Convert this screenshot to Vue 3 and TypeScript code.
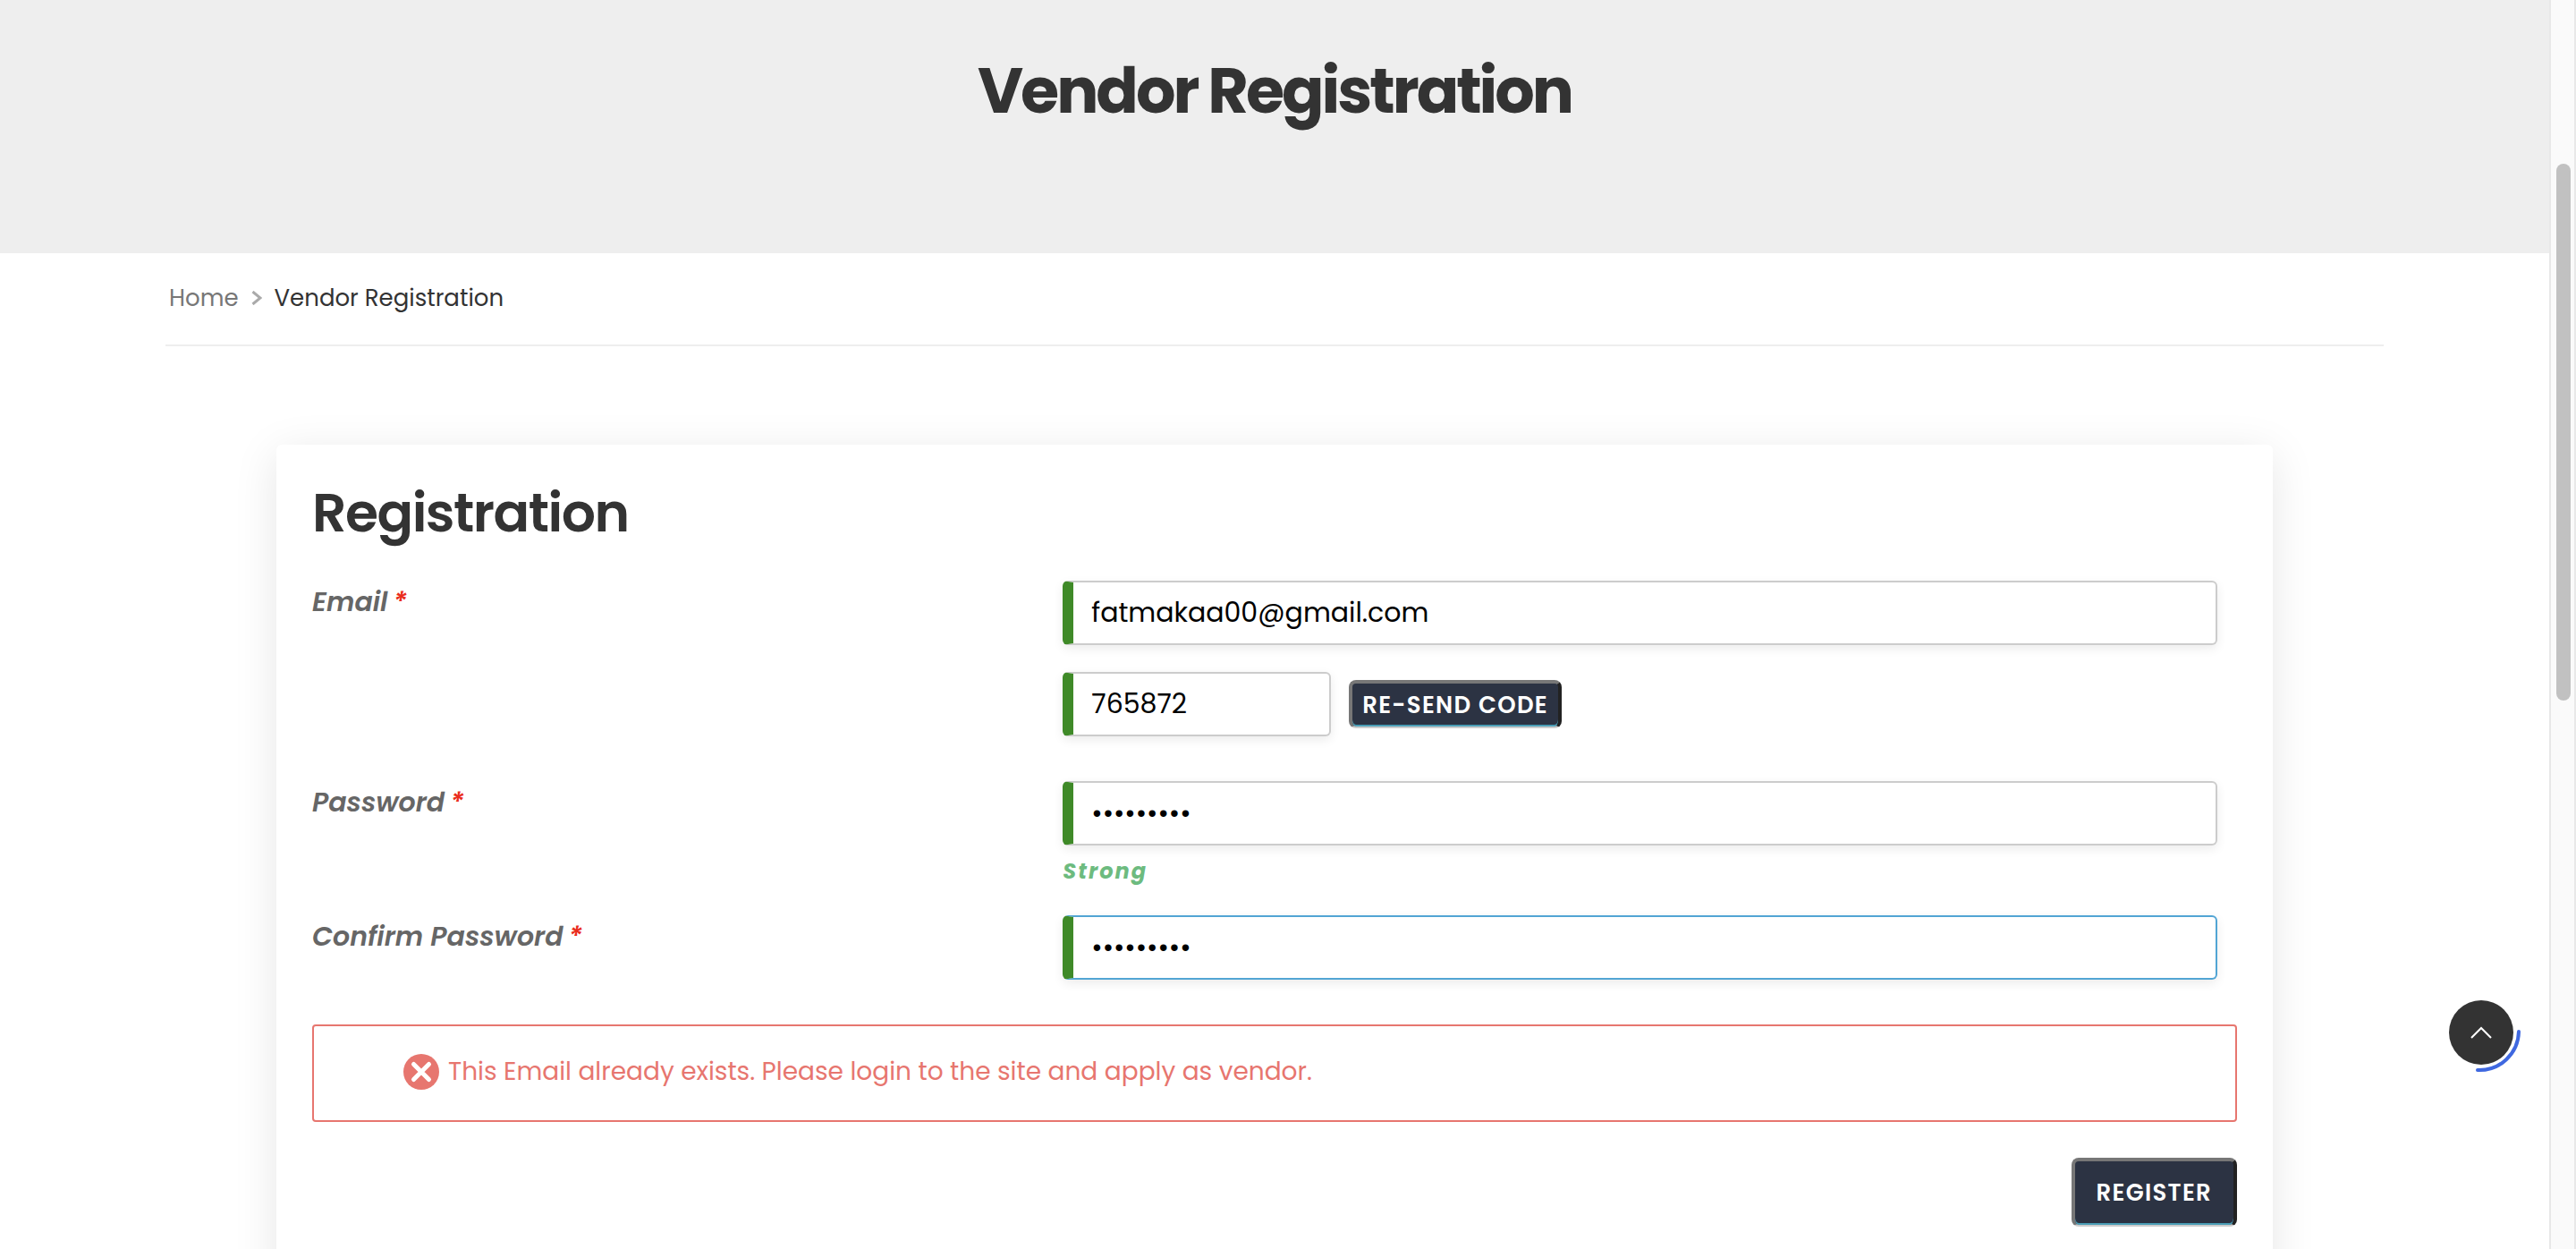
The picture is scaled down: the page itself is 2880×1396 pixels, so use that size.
<script setup lang="ts">
import { ref } from 'vue'

const email = ref('fatmakaa00@gmail.com')
const code = ref('765872')
const password = ref('Vendor#25')
const confirmation = ref('Vendor#25')
</script>

<template>
  <div class="shell">
    <div class="page">
      <header class="banner">
        <h1>Vendor Registration</h1>
      </header>

      <main class="container">
        <nav class="breadcrumb" aria-label="Breadcrumb">
          <a href="#">Home</a>
          <svg class="separator" viewBox="0 0 12 16" aria-hidden="true">
            <path d="M1.500 1 10 8 1.500 15" fill="none" stroke="currentColor" stroke-width="3" />
          </svg>
          <span>Vendor Registration</span>
        </nav>

        <form class="card" @submit.prevent>
          <h2>Registration</h2>

          <div class="row">
            <label for="email">Email<span class="required">*</span></label>
            <div class="field">
              <input id="email" v-model="email" type="email" />
              <div class="verify">
                <input v-model="code" class="code" type="text" aria-label="Verification code" />
                <button type="button" class="resend">RE-SEND CODE</button>
              </div>
            </div>
          </div>

          <div class="row with-hint">
            <label for="password">Password<span class="required">*</span></label>
            <div class="field">
              <input id="password" v-model="password" type="password" />
              <p class="strength">Strong</p>
            </div>
          </div>

          <div class="row">
            <label for="confirmation">Confirm Password<span class="required">*</span></label>
            <div class="field">
              <input id="confirmation" v-model="confirmation" class="active" type="password" />
            </div>
          </div>

          <div class="error" role="alert">
            <svg viewBox="0 0 40 40" aria-hidden="true">
              <circle cx="20" cy="20" r="20" fill="currentColor" />
              <path d="m11.500 11.500 17 17m0-17-17 17" stroke="#fff" stroke-width="5" stroke-linecap="round" />
            </svg>
            <span>This Email already exists. Please login to the site and apply as vendor.</span>
          </div>

          <div class="actions">
            <button type="submit" class="register">REGISTER</button>
          </div>
        </form>
      </main>

      <button type="button" class="to-top" aria-label="Back to top">
        <svg viewBox="0 0 84 84" aria-hidden="true">
          <circle cx="38" cy="38" r="36" fill="#333" />
          <path d="m27 44 11-11 11 11" fill="none" stroke="#fff" stroke-width="2" />
          <path d="M80 37A44 44 0 0 1 34 80" fill="none" stroke="#3f68e0" stroke-width="4" stroke-linecap="round" />
        </svg>
      </button>
    </div>

    <div class="scrollbar" aria-hidden="true"><div class="thumb"></div></div>
  </div>
</template>

<style>
body {
  margin: 0;
  background: #fff;
}
</style>

<style scoped>
.shell {
  display: flex;
  height: 100vh;
  overflow: hidden;
  font-family: Poppins, Inter, sans-serif;
  color: #333;
}
.shell * {
  box-sizing: border-box;
}
input,
button {
  font-family: inherit;
}
.page {
  position: relative;
  display: flex;
  flex-direction: column;
  flex: 1;
}
.banner {
  height: 283px;
  padding-top: 52px;
  background: #eee;
  text-align: center;
}
h1 {
  margin: 0;
  font-size: 70px;
  line-height: 100px;
  font-weight: 700;
  letter-spacing: -3px;
}
.container {
  display: flex;
  flex-direction: column;
  flex: 1;
  margin: 0 185px;
}
.breadcrumb {
  display: flex;
  align-items: center;
  gap: 14px;
  padding: 30px 4px 32px;
  border-bottom: 2px solid #eee;
  font-size: 26px;
  line-height: 40px;
}
.breadcrumb a {
  color: #777;
  text-decoration: none;
}
.separator {
  width: 12px;
  height: 16px;
  color: #aaa;
}
.card {
  flex: 1;
  margin: 110px 5% -40px;
  padding: 36px 40px 0;
  border-radius: 6px;
  background: #fff;
  box-shadow: 0 10px 50px rgba(0, 0, 0, 0.1);
}
h2 {
  margin: 0 0 36px;
  font-size: 60px;
  line-height: 80px;
  font-weight: 600;
  letter-spacing: -0.025em;
}
.row {
  display: grid;
  grid-template-columns: 39% 60%;
  margin-bottom: 50px;
}
.with-hint {
  margin-bottom: 20px;
}
label {
  font-size: 30px;
  line-height: 48px;
  font-style: italic;
  font-weight: 600;
  color: #666;
}
.required {
  margin-left: 6px;
  color: #ea2c1c;
}
input {
  display: block;
  width: 100%;
  height: 72px;
  padding: 0 20px;
  border: 2px solid #ccc;
  border-left: 12px solid #3f8a28;
  border-radius: 6px;
  background: #fff;
  box-shadow: 0 4px 12px rgba(0, 0, 0, 0.08);
  font-size: 30px;
  color: #000;
  outline: none;
}
input.active {
  border-color: #52a5d4;
  border-left-color: #3f8a28;
}
.verify {
  display: flex;
  align-items: center;
  gap: 20px;
  margin-top: 30px;
}
input.code {
  width: 300px;
}
.strength {
  margin: 10px 0;
  font-size: 24px;
  line-height: 38px;
  font-style: italic;
  font-weight: 700;
  letter-spacing: 2px;
  color: #6dbb7f;
}
.resend,
.register {
  border: 4px solid #777;
  border-right-color: #222;
  border-bottom: 2px solid #ccc;
  border-radius: 8px;
  background: #2c3343;
  box-shadow: inset 0 -2px #4a9db5;
  color: #fff;
  font-weight: 600;
  font-size: 26px;
  letter-spacing: 0.05em;
}
.resend {
  height: 54px;
  padding: 0 11px;
}
.error {
  display: flex;
  align-items: center;
  gap: 10px;
  height: 109px;
  padding: 0 0 3px 100px;
  border: 2px solid #e7766f;
  border-radius: 4px;
  color: #e7766f;
  font-size: 28px;
}
.error svg {
  width: 40px;
  height: 40px;
}
.actions {
  display: flex;
  justify-content: flex-end;
  margin-top: 40px;
}
.register {
  height: 77px;
  padding: 0 24px;
}
.to-top {
  position: absolute;
  right: 30px;
  bottom: 196px;
  width: 84px;
  height: 84px;
  padding: 0;
  border: 0;
  background: none;
}
.to-top svg {
  display: block;
}
.scrollbar {
  width: 30px;
  padding: 183px 4px 0 6px;
  border: solid #e8e8e8;
  border-width: 0 2px;
  background: #fafafa;
}
.thumb {
  height: 43vh;
  border-radius: 8px;
  background: #c1c1c1;
}
</style>
